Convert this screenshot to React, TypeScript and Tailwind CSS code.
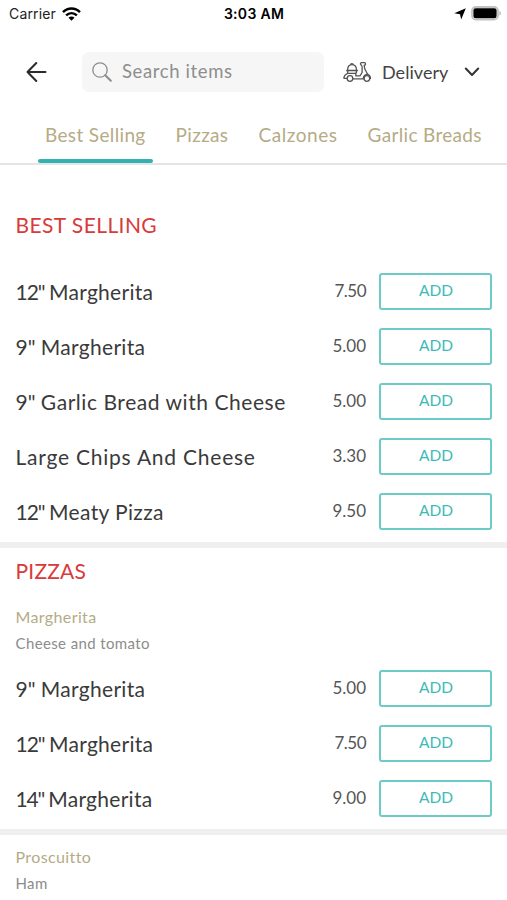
interface Item { size?: string; label: string; price: string; sizeClass?: string; labelClass: string; }

const tabs = [
  { name: 'Best Selling', spacing: 'tracking-[0.35px]' },
  { name: 'Pizzas', spacing: 'tracking-[0.35px]' },
  { name: 'Calzones', spacing: 'tracking-[0.55px]' },
  { name: 'Garlic Breads', spacing: 'tracking-[0.33px]' },
];

const bestSelling: Item[] = [
  { size: '12"', label: 'Margherita', price: '7.50', sizeClass: 'tracking-[-1px]', labelClass: 'tracking-[0.28px]' },
  { size: '9"', label: 'Margherita', price: '5.00', labelClass: 'tracking-[0.3px]' },
  { size: '9"', label: 'Garlic Bread with Cheese', price: '5.00', labelClass: 'tracking-[0.55px]' },
  { label: 'Large Chips And Cheese', price: '3.30', labelClass: 'tracking-[0.77px]' },
  { size: '12"', label: 'Meaty Pizza', price: '9.50', sizeClass: 'tracking-[-1px]', labelClass: 'tracking-[0.36px]' },
];

const margherita: Item[] = [
  { size: '9"', label: 'Margherita', price: '5.00', labelClass: 'tracking-[0.3px]' },
  { size: '12"', label: 'Margherita', price: '7.50', sizeClass: 'tracking-[-1px]', labelClass: 'tracking-[0.28px]' },
  { size: '14"', label: 'Margherita', price: '9.00', sizeClass: 'tracking-[-1.2px]', labelClass: 'tracking-[0.28px]' },
];

function StatusBar() {
  return (
    <div className="grid h-[27px] grid-cols-3 items-center pl-[9px] pr-[6px] font-['Inter',sans-serif] text-[14px] text-black">
      <div className="flex items-center gap-1.5">
        <span className="text-[#222] tracking-[0.15px]">Carrier</span>
        <svg width="19" height="14" viewBox="0 0 19 14" fill="none" stroke="#000" strokeWidth="2.5">
          <path d="M1 5.2C6 .3 13 .3 18 5.2" />
          <path d="M4.1 8.4c3.2-3 7.6-3 10.8 0" />
          <path d="M6.5 10.7c1.8-1.6 4.2-1.6 6 0l-3 3z" fill="#000" stroke="none" />
        </svg>
      </div>
      <span className="pr-[2px] text-center font-semibold tracking-[0.3px]">3:03 AM</span>
      <div className="flex items-center justify-end gap-[5px]">
        <svg width="12" height="12" viewBox="0 0 12 12">
          <path d="M11.8.3 7.2 11.6 6 6.3.3 5.2z" fill="#000" />
        </svg>
        <svg width="30" height="15" viewBox="0 0 30 15">
          <rect x="1" y="1" width="26" height="12.6" rx="3.8" fill="#fff" stroke="#c2c2c2" strokeWidth="1.8" />
          <rect x="2.4" y="2.3" width="23.2" height="10" rx="2.2" fill="#000" />
          <path d="M28.4 5v4.6c2-.6 2-4 0-4.600z" fill="#b8b8b8" />
        </svg>
      </div>
    </div>
  );
}

function Scooter() {
  return (
    <svg width="28" height="20" viewBox="0 0 28 20" fill="none" stroke="#555" strokeWidth="1.3" strokeLinecap="round" strokeLinejoin="round">
      <path d="M4.6 8.2C4.6 4.8 6.3 2.7 9 2.7s4.5 2.1 4.5 5.5" />
      <path d="M7.8 2.5c0-1.300 2.400-1.300 2.400 0" />
      <path d="M3.7 8.500h10.800M5.300 8.700c-.9.800-1 1.700-.5 2.600h8c.9-.8.900-1.700.4-2.600" />
      <path d="M4.800 11.300C2.200 12.200.9 14 .9 16.300h3M9.900 16.800h11" />
      <path d="M12.800 11.300v2.500h4.200l2.100-3.300v-6l-1.700-2.700.6-1.100h3.600c1.200 0 1.200 2.500 0 2.500h-.4l.5 3.600 2.900 5.400c1.700.8 2.900 2.300 3 4.300" />
      <path d="M24.600 12.200c-2.400.4-4 1.900-4.400 4.100" />
      <circle cx="7" cy="16.500" r="2.800" />
      <circle cx="23.900" cy="16.500" r="2.800" />
    </svg>
  );
}

function Header() {
  return (
    <div className="flex h-[88px] items-center pl-[26px] pr-[27px] pt-0.5">
      <svg width="21" height="22" viewBox="0 0 21 22" fill="none" stroke="#2b2b2b" strokeWidth="2" strokeLinecap="round" strokeLinejoin="round">
        <path d="M19.500 11h-18M10.300 2 1.500 11l8.800 9" />
      </svg>
      <div className="ml-[35px] flex h-10 w-[242px] items-center rounded-[7px] bg-[#f6f6f6] pl-[10px]">
        <svg width="20" height="20" viewBox="0 0 20 20" fill="none" stroke="#8e8e8e" strokeLinecap="round">
          <circle cx="8" cy="8" r="7.2" strokeWidth="1.3" />
          <path d="m13.3 13.3 5.500 5.500" strokeWidth="2" />
        </svg>
        <span className="ml-2.5 text-[18.5px] tracking-[0.62px] text-[#8e8e8e]">Search items</span>
      </div>
      <div className="ml-[19px] flex flex-1 items-center text-[#444]">
        <Scooter />
        <span className="ml-[11px] text-[18px] tracking-[0.05px]">Delivery</span>
        <svg className="ml-auto" width="16" height="10" viewBox="0 0 16 10" fill="none" stroke="#333" strokeWidth="2" strokeLinecap="round" strokeLinejoin="round">
          <path d="m1.800 1.500 6.200 6.500 6.200-6.500" />
        </svg>
      </div>
    </div>
  );
}

function Tabs() {
  return (
    <div className="flex h-[50px] border-b-2 border-[#e5e5e5] pl-[38px]">
      {tabs.map((tab, i) => (
        <div key={tab.name} className="flex flex-col">
          <span className={`mr-4 flex h-[41px] items-center whitespace-nowrap px-[7px] text-[19px] text-[#b5ab86] ${tab.spacing}`}>{tab.name}</span>
          {i === 0 && <div className="mt-[3px] h-1 w-[115px] rounded-sm bg-[#33b1b1]" />}
        </div>
      ))}
    </div>
  );
}

function Row({ item }: { item: Item }) {
  return (
    <div className="flex h-[55px] items-center pl-[15.5px] pr-[15px]">
      <span className="flex-1 text-[21px] text-[#3a3a3a]">
        {item.size && <span className={item.sizeClass}>{item.size} </span>}
        <span className={item.labelClass}>{item.label}</span>
      </span>
      <span className={`pb-0.5 text-[17px] text-[#555] ${item.price === '7.50' ? 'tracking-[-0.5px]' : ''}`}>{item.price}</span>
      <button className="ml-[13px] h-[37px] w-[113px] rounded-[3px] border-2 border-[#6ccac7] pb-px pl-px text-[15.5px] text-[#3dbab5]">ADD</button>
    </div>
  );
}

function GroupTitle({ name, description }: { name: string; description: string }) {
  return (
    <div className="pl-[15.5px]">
      <div className="flex h-[26px] items-center text-[16px] tracking-[0.38px] text-[#b5ab86]">{name}</div>
      <div className="flex h-[26px] items-center text-[15px] tracking-[0.38px] text-[#8c8c8c]">{description}</div>
    </div>
  );
}

export default function App() {
  return (
    <div className="h-[900px] w-[507px] overflow-hidden bg-white font-['Lato',sans-serif]">
      <StatusBar />
      <Header />
      <Tabs />
      <section className="border-b-[6px] border-[#efefef] pb-[3px] pt-[39px]">
        <h2 className="mb-[19px] flex h-[41px] items-center pl-[15.5px] text-[21px] tracking-[0.42px] text-[#d93a3a]">BEST SELLING</h2>
        {bestSelling.map((item, i) => <Row key={i} item={item} />)}
      </section>
      <section className="border-b-[6px] border-[#efefef] pb-[3px]">
        <h2 className="mb-[10px] flex h-[46px] items-center pl-[15.5px] text-[21px] tracking-[0.2px] text-[#d93a3a]">PIZZAS</h2>
        <GroupTitle name="Margherita" description="Cheese and tomato" />
        <div className="mt-[5px]">
          {margherita.map((item, i) => <Row key={i} item={item} />)}
        </div>
      </section>
      <section className="pt-[9px]">
        <GroupTitle name="Proscuitto" description="Ham" />
      </section>
    </div>
  );
}
